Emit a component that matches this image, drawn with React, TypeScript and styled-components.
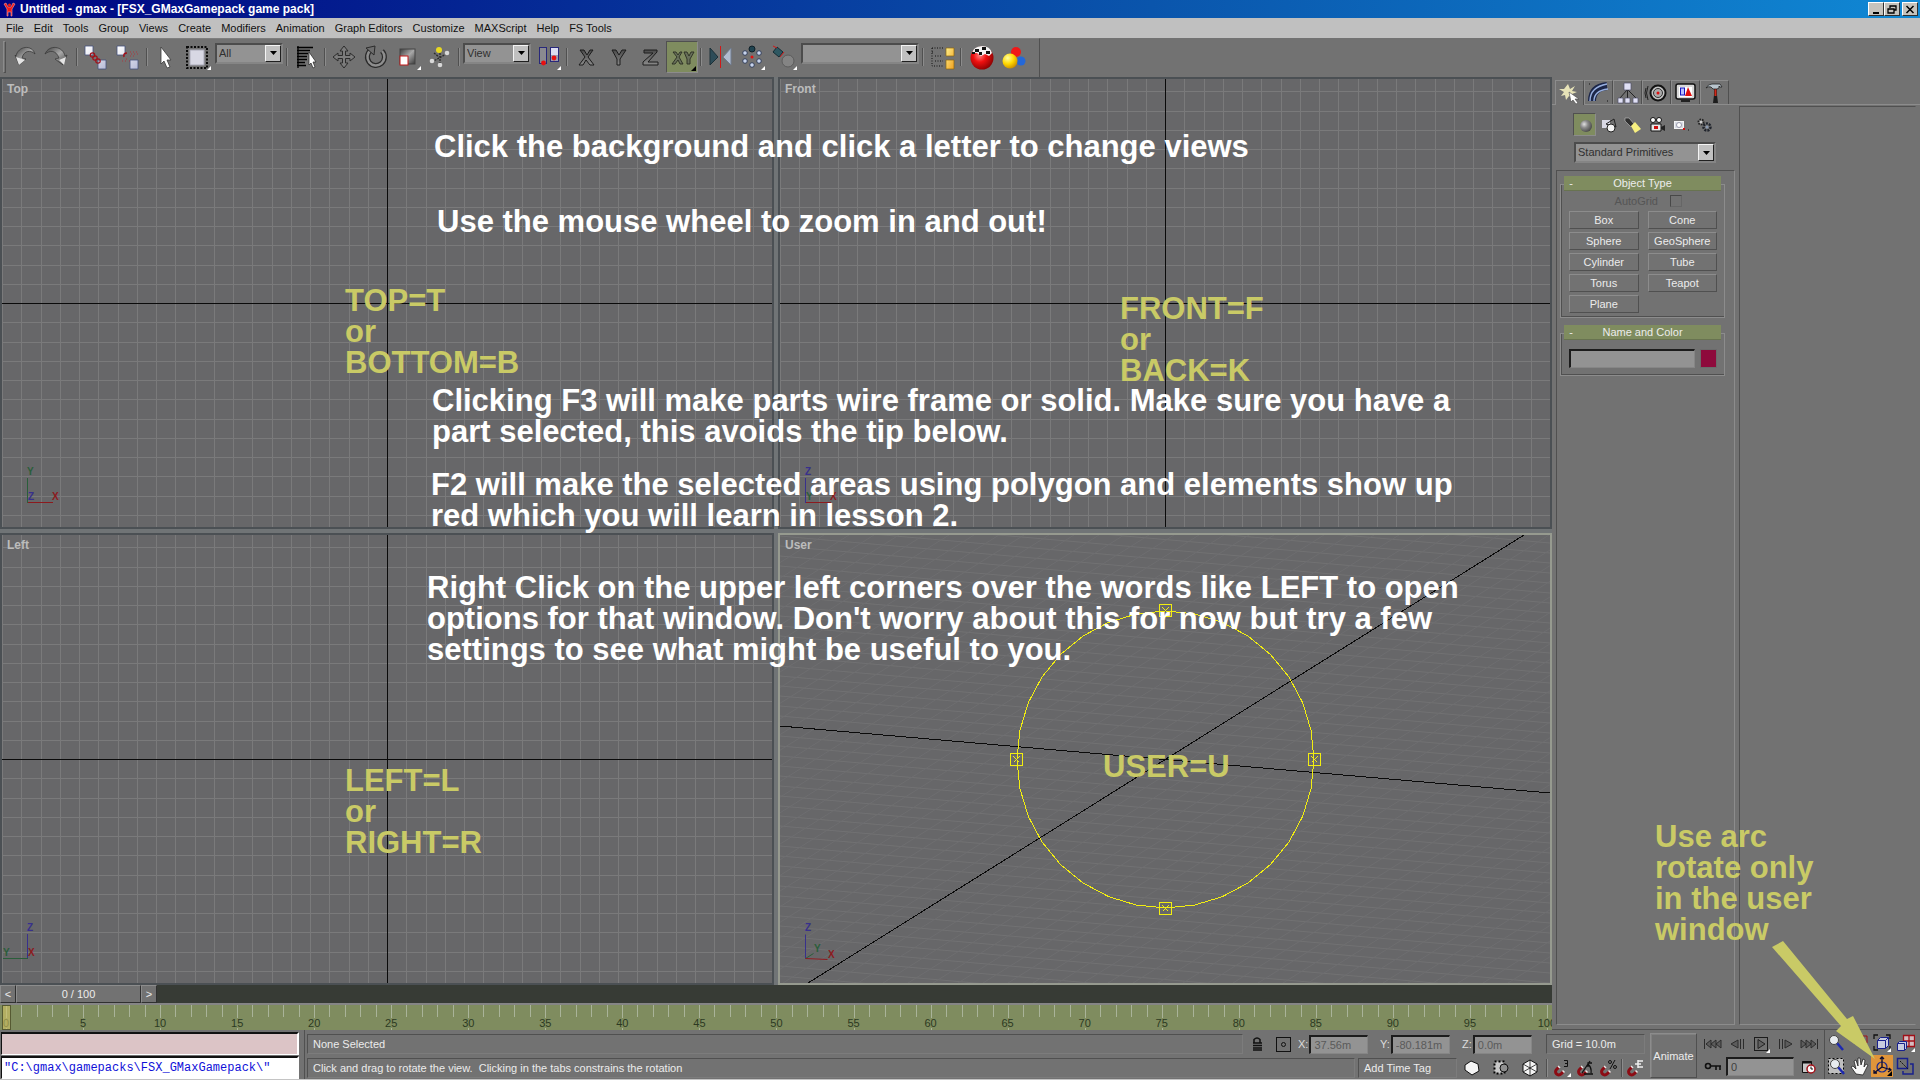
import React from "react";
import styled, { createGlobalStyle, css } from "styled-components";

const c = {
  face: "#727272",
  dark: "#505050",
  light: "#8c8c8c",
  field: "#939393",
  olive: "#7f8c5f",
  view: "#676769",
  gridLine: "#7a7a7b",
  viewEdge: "#4b5054",
  yellow: "#c9ca66",
  text: "#ececec",
};

const Global = createGlobalStyle`
  *, *::before, *::after { box-sizing: border-box; }
  body { margin: 0; background: ${c.face}; overflow: hidden; }
  body, button, input, select, textarea {
    font-family: "Liberation Sans", Arial, sans-serif;
    font-size: 11px;
  }
`;

const Window = styled.div`
  position: relative;
  display: flex;
  flex-direction: column;
  height: 100vh;
  background: ${c.face};
  color: ${c.text};
  overflow: hidden;
`;

/* ---------- title and menu ---------- */
const TitleBar = styled.header`
  display: flex;
  align-items: center;
  flex: none;
  height: 18px;
  padding: 0 2px 0 3px;
  gap: 4px;
  background: linear-gradient(to right, #000482, #0a55ac 60%, #1088d4);
`;
const Title = styled.h1`
  flex: 1;
  margin: 0;
  font-size: 12px;
  line-height: 18px;
  font-weight: bold;
  color: #fff;
`;
const WindowButtons = styled.div`
  display: flex;
  align-items: center;
`;
const WindowButton = styled.button<{ $gap?: boolean }>`
  display: grid;
  place-items: center;
  width: 16px;
  height: 14px;
  padding: 0;
  margin-left: ${(p) => (p.$gap ? 2 : 0)}px;
  background: #c6c3bd;
  border: 1px solid;
  border-color: #fff #303030 #303030 #fff;
`;
const MenuBar = styled.nav`
  display: flex;
  align-items: center;
  flex: none;
  height: 20px;
  padding-left: 6px;
  gap: 10px;
  background: #c0c0c0;
`;
const MenuItem = styled.button`
  padding: 0;
  border: 0;
  background: none;
  color: #111;
  line-height: 18px;
`;

/* ---------- toolbar ---------- */
const Toolbar = styled.div`
  display: flex;
  align-items: center;
  flex: none;
  align-self: flex-start;
  height: 39px;
  padding: 0 11px 2px 0;
  border-top: 1px solid #7e7e7e;
  border-right: 1px solid ${c.dark};
`;
const Grip = styled.span`
  width: 3px;
  height: 32px;
  margin: 0 4px 0 3px;
  border: 1px solid;
  border-color: ${c.light} ${c.dark} ${c.dark} ${c.light};
`;
const Separator = styled.span`
  width: 2px;
  height: 18px;
  margin: 0 2px;
  border-left: 1px solid ${c.dark};
  border-right: 1px solid ${c.light};
`;
const ToolButton = styled.button<{ $active?: boolean }>`
  position: relative;
  display: block;
  width: 32px;
  height: 32px;
  padding: 0;
  border: 0;
  background: none;
  svg { display: block; }
  ${(p) =>
    p.$active &&
    css`
      background: ${c.olive};
      background-clip: padding-box;
      border: 1px solid;
      border-color: ${c.dark} ${c.light} ${c.light} ${c.dark};
      svg { margin: -1px; }
    `}
`;
const SelectFrame = styled.span<{ $w: number; $raise?: boolean }>`
  display: grid;
  grid-template-columns: 1fr 16px;
  width: ${(p) => p.$w}px;
  height: 21px;
  margin: 0 1px ${(p) => (p.$raise ? 8 : 0)}px;
  border: 2px solid;
  border-color: #4c4c4c #858585 #858585 #4c4c4c;
  background: ${c.field};
`;
const SelectField = styled.select`
  grid-area: 1 / 1 / 2 / 3;
  min-width: 0;
  width: 100%;
  padding: 0 18px 0 2px;
  appearance: none;
  border: 0;
  border-radius: 0;
  background: transparent;
  color: #303030;
  line-height: 17px;
`;
const SelectArrow = styled.span`
  grid-area: 1 / 2 / 2 / 3;
  display: grid;
  place-items: center;
  pointer-events: none;
  background: #c0c0c0;
  border: 1px solid;
  border-color: #f4f4f4 #202020 #202020 #f4f4f4;
`;

/* ---------- work area ---------- */
const Work = styled.main`
  display: flex;
  flex: 1;
  min-height: 0;
`;
const Stage = styled.div`
  display: flex;
  flex-direction: column;
  flex: 1;
  min-width: 0;
`;
const Viewports = styled.div`
  display: grid;
  flex: 1;
  min-height: 0;
  grid-template: 1fr 1fr / 1fr 1fr;
  gap: 4px;
  background: #707476;
`;
const Viewport = styled.section<{ $active?: boolean }>`
  position: relative;
  min-width: 0;
  min-height: 0;
  overflow: hidden;
  border: 2px solid ${(p) => (p.$active ? "#969a8f" : c.viewEdge)};
  background: ${c.view};
  > svg { position: absolute; inset: 0; width: 100%; height: 100%; }
`;
const ViewportName = styled.h2`
  position: absolute;
  top: 3px;
  left: 5px;
  margin: 0;
  font-size: 12px;
  line-height: 14px;
  font-weight: bold;
  color: #bcbcbc;
`;
const AxisText = styled.text`
  font: bold 10px "Liberation Sans", Arial, sans-serif;
`;

/* ---------- time controls ---------- */
const SliderBar = styled.div`
  display: flex;
  flex: none;
  height: 18px;
  background: #373b35;
`;
const SliderButton = styled.button<{ $wide?: boolean }>`
  width: ${(p) => (p.$wide ? 125 : 16)}px;
  padding: 0;
  background: ${c.face};
  color: ${c.text};
  border: 1px solid;
  border-color: ${c.light} #303030 #303030 ${c.light};
`;
const Track = styled.div`
  position: relative;
  display: flex;
  flex: none;
  height: 27px;
  padding-left: 6px;
  overflow: hidden;
  background: ${c.olive};
  border-top: 2px solid #858585;
`;
const minorTicks =
  "repeating-linear-gradient(to right, #a9b399 0 1px, transparent 1px 20%) 0 0 / 100% 12px no-repeat,";
const TrackCell = styled.div<{ $last?: boolean }>`
  display: flex;
  align-items: flex-end;
  flex: ${(p) => (p.$last ? "0 0 5px" : "1 1 0")};
  min-width: 0;
  background: ${(p) => (p.$last ? "" : minorTicks)}
    linear-gradient(#a9b399, #a9b399) 0 0 / 1px 13px no-repeat,
    linear-gradient(#a9b399, #a9b399) 0 100% / 1px 2px no-repeat;
`;
const TrackLabel = styled.span`
  flex: none;
  width: 30px;
  margin: 0 0 1px -15px;
  text-align: center;
  font-size: 11px;
  line-height: 12px;
  color: #2c3a22;
`;
const TrackCursor = styled.span`
  position: absolute;
  left: 2px;
  top: 0;
  width: 9px;
  height: 25px;
  border: 1px solid #565a32;
  background: rgba(212, 196, 100, 0.6);
`;

/* ---------- command panel ---------- */
const Panel = styled.aside`
  display: flex;
  flex-direction: column;
  flex: 0 0 368px;
  min-width: 0;
  padding-top: 3px;
  border-bottom: 1px solid ${c.dark};
`;
const Tabs = styled.div`
  display: flex;
  flex: none;
  height: 25px;
  padding-left: 3px;
  border-bottom: 1px solid ${c.light};
`;
const Tab = styled.button<{ $active?: boolean }>`
  width: 29px;
  height: ${(p) => (p.$active ? 25 : 24)}px;
  padding: 0;
  background: ${c.face};
  border: solid;
  border-width: 1px 1px 0 1px;
  border-color: ${c.light} ${c.dark} ${c.dark} ${c.light};
  svg { display: block; }
`;
const PanelBody = styled.div`
  display: flex;
  flex: 1;
  min-height: 0;
  padding: 1px 4px 4px;
`;
const PanelColumn = styled.div`
  display: flex;
  flex-direction: column;
  flex: 0 0 179px;
  min-width: 0;
`;
const PanelRest = styled.div`
  flex: 1;
  margin-left: 4px;
  border: 1px solid;
  border-color: ${c.dark} transparent ${c.light} ${c.dark};
`;
const Categories = styled.div`
  display: flex;
  gap: 1px;
  padding: 7px 0 6px 17px;
`;
const Category = styled.button<{ $active?: boolean }>`
  width: 23px;
  height: 23px;
  padding: 0;
  background: ${(p) => (p.$active ? c.olive : "none")};
  border: 1px solid;
  border-color: ${(p) =>
    p.$active ? `${c.dark} ${c.light} ${c.light} ${c.dark}` : "transparent"};
  svg { display: block; }
`;
const SubtypeRow = styled.div`
  padding-left: 17px;
`;
const Rollouts = styled.div`
  flex: 1;
  margin-top: 7px;
  padding: 5px 9px 0 3px;
  border: 1px solid;
  border-color: ${c.dark} ${c.light} ${c.light} ${c.dark};
`;
const Rollout = styled.section`
  margin-bottom: 7px;
`;
const RolloutHead = styled.button`
  position: relative;
  display: grid;
  grid-template-columns: 14px 1fr 14px;
  align-items: center;
  width: calc(100% - 8px);
  height: 15px;
  margin: 0 4px;
  padding: 0;
  border: 0;
  border-bottom: 1px solid #687350;
  background: ${c.olive};
  color: ${c.text};
  line-height: 14px;
`;
const RolloutBox = styled.div`
  margin-top: -7px;
  padding: 9px 7px 3px 8px;
  border: 1px solid ${c.light};
  box-shadow: inset 1px 0 ${c.dark}, inset 0 -1px ${c.dark};
`;
const AutoGrid = styled.label`
  display: flex;
  align-items: center;
  justify-content: flex-end;
  gap: 12px;
  height: 13px;
  margin: 0 35px 4px 0;
  color: #555;
`;
const CheckBox = styled.input`
  appearance: none;
  width: 12px;
  height: 12px;
  margin: 0;
  border: 1px solid;
  border-color: #484848 #666 #666 #484848;
`;
const ObjectGrid = styled.div`
  display: grid;
  grid-template-columns: 1fr 1fr;
  gap: 3px 9px;
  padding-bottom: 1px;
`;
const PushButton = styled.button`
  height: 18px;
  padding: 0;
  background: ${c.face};
  color: ${c.text};
  line-height: 14px;
  border: 1px solid;
  border-color: ${c.light} ${c.dark} ${c.dark} ${c.light};
`;
const NameRow = styled.div`
  display: flex;
  gap: 5px;
  padding: 6px 0 4px;
`;
const TextField = styled.input`
  flex: 1 1 0;
  width: 0;
  min-width: 0;
  height: 19px;
  padding: 0 0 0 3px;
  border: solid;
  border-color: #1c1c1c #868686 #868686 #1c1c1c;
  border-width: 2px 1px 1px 2px;
  background: ${c.field};
  color: #404040;
`;
const Swatch = styled.button`
  width: 17px;
  height: 19px;
  padding: 0;
  border: 1px solid #6b6b6b;
  background: #8e0a3c;
`;

/* ---------- status bar ---------- */
const StatusBar = styled.footer`
  display: flex;
  flex: none;
  height: 50px;
  border-bottom: 1px solid #c4c4c4;
`;
const Listener = styled.div`
  display: flex;
  flex-direction: column;
  gap: 1px;
  flex: 0 0 299px;
  padding: 2px 0 0 1px;
`;
const ListenerLine = styled.input<{ $pink?: boolean }>`
  width: 100%;
  height: 23px;
  padding: 0 0 0 2px;
  border: solid;
  border-color: #111 #fff #fff #111;
  border-width: 2px 2px 1px 1px;
  background: ${(p) => (p.$pink ? "#dcc4c6" : "#fff")};
  color: #1010d8;
  font-family: "Liberation Mono", monospace;
  font-size: 12px;
`;
const StatusMain = styled.div`
  display: flex;
  flex-direction: column;
  flex: 1;
  gap: 4px;
  min-width: 0;
  margin-left: 5px;
  padding: 4px 3px 0 2px;
  border-left: 1px solid ${c.dark};
`;
const StatusRow = styled.div`
  display: flex;
  align-items: center;
  height: 20px;
`;
const Sunken = styled.div<{ $w?: number }>`
  flex: ${(p) => (p.$w ? `0 0 ${p.$w}px` : "1 1 0")};
  height: 20px;
  padding-left: 5px;
  line-height: 18px;
  white-space: pre;
  overflow: hidden;
  border: 1px solid;
  border-color: ${c.dark} #7c7c7c #7c7c7c ${c.dark};
`;
const IconCell = styled.button<{ $w: number; $active?: boolean }>`
  display: grid;
  place-items: center;
  flex: 0 0 ${(p) => p.$w}px;
  width: ${(p) => p.$w}px;
  height: 22px;
  padding: 0;
  border: 0;
  background: ${(p) => (p.$active ? "#e0953a" : "none")};
`;
const Coordinate = styled.label`
  display: flex;
  align-items: center;
  flex: 0 0 82px;
  gap: 1px;
  padding-right: 12px;
  color: #dcdcdc;
  input { color: #5a5a5a; }
`;
const Gap = styled.span<{ $w: number }>`
  flex: 0 0 ${(p) => p.$w}px;
`;
const AnimateButton = styled.button`
  flex: 0 0 47px;
  height: 45px;
  margin: 3px 3px 0 2px;
  padding: 0;
  background: ${c.face};
  color: ${c.text};
  border: 1px solid;
  border-color: ${c.light} ${c.dark} ${c.dark} ${c.light};
  box-shadow: inset 1px 1px #808080;
`;
const Playback = styled.div`
  flex: 0 0 122px;
  min-width: 0;
  padding-top: 2px;
`;
const PlayRow = styled.div`
  display: flex;
  align-items: center;
  justify-content: space-between;
  height: 23px;
`;
const Navigation = styled.div`
  display: grid;
  grid-template-columns: repeat(4, 23px);
  grid-auto-rows: 23px;
  margin-left: 2px;
  padding: 2px 3px 0 0;
  border-left: 1px solid ${c.dark};
`;

/* ---------- notes written over the screen ---------- */
const Note = styled.p<{ $x: number; $y: number; $tone?: "yellow" }>`
  position: absolute;
  left: ${(p) => p.$x}px;
  top: ${(p) => p.$y}px;
  margin: 0;
  font-size: 31px;
  line-height: 31px;
  font-weight: bold;
  white-space: pre-line;
  width: max-content;
  color: ${(p) => (p.$tone ? c.yellow : "#fff")};
`;
const NoteArrow = styled.svg`
  position: absolute;
  left: 1765px;
  top: 935px;
  width: 115px;
  height: 130px;
`;

/* ---------- drawings ---------- */
const Flyout = () => <path d="M29 25v4h-4z" fill="#fff" />;

const HiddenSvg = styled.svg`
  position: absolute;
`;

const Defs = () => (
  <HiddenSvg width="0" height="0" aria-hidden="true">
    <defs>
      <linearGradient id="steel" x1="0" y1="0" x2="1" y2="1">
        <stop offset="0" stopColor="#3c3c3c" />
        <stop offset="0.5" stopColor="#a8a8a8" />
        <stop offset="1" stopColor="#3a3a3a" />
      </linearGradient>
      <linearGradient id="letter" x1="0" y1="0" x2="0" y2="1">
        <stop offset="0" stopColor="#4a4a4a" />
        <stop offset="1" stopColor="#8a8a8a" />
      </linearGradient>
      <linearGradient id="paper" x1="0" y1="0" x2="1" y2="1">
        <stop offset="0" stopColor="#fff" />
        <stop offset="1" stopColor="#b8bcd8" />
      </linearGradient>
      <linearGradient id="amber" x1="0" y1="0" x2="1" y2="1">
        <stop offset="0" stopColor="#fff08a" />
        <stop offset="1" stopColor="#f0a020" />
      </linearGradient>
      <radialGradient id="redBall" cx="0.4" cy="0.4" r="0.7">
        <stop offset="0" stopColor="#ff8080" />
        <stop offset="0.4" stopColor="#f01010" />
        <stop offset="1" stopColor="#7a0000" />
      </radialGradient>
      <radialGradient id="yellowBall" cx="0.35" cy="0.3" r="0.8">
        <stop offset="0" stopColor="#ffffa0" />
        <stop offset="0.5" stopColor="#ffd800" />
        <stop offset="1" stopColor="#c08000" />
      </radialGradient>
      <radialGradient id="grayBall" cx="0.35" cy="0.35" r="0.75">
        <stop offset="0" stopColor="#e0e0e0" />
        <stop offset="0.4" stopColor="#8c8c8c" />
        <stop offset="1" stopColor="#404040" />
      </radialGradient>
    </defs>
  </HiddenSvg>
);

const Svg = ({ s = 32, children }: { s?: number; children: React.ReactNode }) => (
  <svg width={s} height={s} viewBox={`0 0 ${s} ${s}`} aria-hidden="true">
    {children}
  </svg>
);

const art: Record<string, React.ReactNode> = {
  undo: (
    <>
      <path d="M6 15C8 5 22 3 25 13C21 9 14 9 12 17l4 1-7 6-4-10z" fill="url(#steel)" stroke="#333" strokeWidth=".7" />
      <path d="M6 16l3 8 6-5z" fill="#e4e4e4" />
    </>
  ),
  redo: (
    <>
      <path d="M23 15C21 5 7 3 3 13C8 9 14 9 17 17l-4 1 8 6 4-10z" fill="url(#steel)" stroke="#333" strokeWidth=".7" />
      <path d="M22 24l2-8-7 3z" fill="#e4e4e4" />
    </>
  ),
  link: (
    <>
      <path d="M5 5h8v9H5zM18 19h8v9h-8z" fill="url(#paper)" stroke="#44507c" strokeWidth=".8" />
      <g fill="none" stroke="#a01018" strokeWidth="1.2">
        <circle cx="12.500" cy="14" r="2.200" />
        <circle cx="15" cy="17" r="2.200" />
        <circle cx="18" cy="20" r="2.200" />
      </g>
    </>
  ),
  unlink: (
    <>
      <path d="M5 5h8v9H5zM18 19h8v9h-8z" fill="url(#paper)" stroke="#44507c" strokeWidth=".8" />
      <path d="M12 16q-1-4 3-4" fill="none" stroke="#a01018" strokeWidth="1.500" />
      <path d="M18 11h1m2 0h1m2 0h1M19 13h1m2 0h1m2 0h1M18 15h1m2 0h1M10 20h1m2 0h1M14 18h1m2 2h1" stroke="#a83840" />
    </>
  ),
  cursor: <path d="M11 6l10 13-4 0 3 7-3 1-3-7-3 3z" fill="#fff" stroke="#3a3a3a" strokeWidth=".8" />,
  region: (
    <>
      <rect x="5" y="6" width="20" height="21" fill="none" stroke="#0a0a0a" strokeWidth="2" strokeDasharray="2 1.500" />
      <rect x="8" y="9" width="14" height="15" fill="#d8d8e4" stroke="#aaaab8" />
      <Flyout />
    </>
  ),
  byName: (
    <>
      <path d="M7 6.500h16M7 9.500h13M7 12.500h11M7 15.500h10M7 18.500h10M7 21.500h8M7 24.500h9M8 5v22" stroke="#000" strokeWidth="1.300" />
      <path d="M19 11l7 10-3 0 2 5-2 1-2-5-2 2z" fill="#fff" stroke="#222" strokeWidth=".7" />
    </>
  ),
  move: (
    <path
      d="M16 5l4 5h-2.500v4.500H22V12l5 4-5 4v-2.500h-4.500V22H20l-4 5-4-5h2.500v-4.500H10V20l-5-4 5-4v2.500h4.500V10H12z"
      fill="#7c7c7c"
      stroke="#2c2c2c"
    />
  ),
  rotate: (
    <>
      <path d="M11 9A8.500 8.500 0 1 0 22 10" fill="none" stroke="#2b2b2b" strokeWidth="5" />
      <path d="M11 9A8.500 8.500 0 1 0 22 10" fill="none" stroke="#8e8e8e" strokeWidth="2.500" />
      <path d="M6 7l9-2-1 9z" fill="#6e6e6e" stroke="#2b2b2b" />
    </>
  ),
  scale: (
    <>
      <rect x="8" y="8" width="15" height="15" fill="url(#steel)" stroke="#444" />
      <rect x="8" y="15" width="8" height="9" fill="#fff" stroke="#c01818" />
      <Flyout />
    </>
  ),
  manipulate: (
    <>
      <path d="M16 9v15M8 21l16-9M10 12l5 4" stroke="#2c2c2c" strokeWidth="1.300" strokeDasharray="2 1" />
      <circle cx="15" cy="9" r="3" fill="#e8d820" />
      <circle cx="23" cy="12" r="2.300" fill="#d8d8d8" />
      <circle cx="8" cy="20" r="2.300" fill="#d8d8d8" />
      <circle cx="16" cy="24" r="2.300" fill="#d8d8d8" />
    </>
  ),
  center: (
    <>
      <rect x="7.500" y="6.500" width="7" height="16" fill="#8a8a90" stroke="#28287a" />
      <rect x="18.500" y="6.500" width="8" height="14" fill="#dcdcf0" stroke="#28287a" />
      <path d="M19 14h7v6h-7z" fill="#9c9cb0" />
      <circle cx="11.500" cy="22" r="2.400" fill="#e81010" />
      <circle cx="22" cy="17" r="2.400" fill="#e81010" />
      <Flyout />
    </>
  ),
  X: <path d="M10 9h4l3 5 3-5h3l-5 7 6 8h-4l-4-5-3 5H9l6-8z" fill="url(#letter)" stroke="#1c1c1c" />,
  Y: <path d="M10 9h4l3 5 3-5h4l-6 9v6h-3v-6z" fill="url(#letter)" stroke="#1c1c1c" />,
  Z: <path d="M10 9h13v2L14 21h10v3H9v-3l10-9h-9z" fill="url(#letter)" stroke="#1c1c1c" />,
  XY: (
    <>
      <path
        d="M7 11h3l2 3 2-3h2l-3 5 4 7h-3l-2-4-3 4H6l5-7zM18 11h3l2 4 2-4h3l-4 7v5h-3v-5z"
        fill="#68705a"
        stroke="#2a2e22"
        strokeWidth=".9"
      />
      <path d="M30 25v5h-5z" />
    </>
  ),
  mirror: (
    <>
      <path d="M6 7l8 9-8 8z" fill="#2e4c58" stroke="#1c3038" />
      <path d="M27 7l-8 9 8 8z" fill="#b0bcd0" stroke="#707c90" />
      <path d="M16.500 5v22" stroke="#d01818" />
    </>
  ),
  array: (
    <>
      <g fill="#c8d4ec" stroke="#34405c">
        <circle cx="9" cy="12" r="2.300" />
        <circle cx="23" cy="12" r="2.300" />
        <circle cx="9" cy="20" r="2.300" />
        <circle cx="23" cy="20" r="2.300" />
        <circle cx="16" cy="24" r="2.300" />
      </g>
      <circle cx="16" cy="8" r="3" fill="#204450" stroke="#102028" />
      <circle cx="16" cy="16" r="1.500" fill="#e01010" />
      <Flyout />
    </>
  ),
  align: (
    <>
      <circle cx="20" cy="20" r="6" fill="#848484" stroke="#5c5c5c" />
      <path d="M9 6l6 5-4 5-6-5z" fill="#2e5862" stroke="#142c34" />
      <path d="M12 16l4-5M5 5l4 2" stroke="#d01818" />
      <Flyout />
    </>
  ),
  trackView: (
    <>
      <path d="M6 7h12M6 11h1M9 15h7M6 7v18h11M9 20h8" fill="none" stroke="#111" strokeDasharray="1 1.500" />
      <path d="M20 7h8v8h-8zM20 19h8v9h-8z" fill="url(#amber)" stroke="#8a6410" strokeWidth=".7" />
    </>
  ),
  material: (
    <>
      <circle cx="18" cy="17" r="11.500" fill="url(#redBall)" />
      <path d="M8 12Q9 6 18 5q8 0 10 7l-3 3-4-2-4 2-4-3z" fill="#f4f4f4" />
      <path d="M11 8h4v3h-4zM18 6h4v3h-4zM15 11h3v3h-3zM22 10h4v3h-4zM8 11h3v2H8z" fill="#111" />
    </>
  ),
  balls: (
    <>
      <circle cx="20" cy="11" r="5" fill="#f01818" />
      <circle cx="25" cy="20" r="4.500" fill="#2468d8" />
      <circle cx="14" cy="20" r="7.500" fill="url(#yellowBall)" />
    </>
  ),
};

const tabArt: React.ReactNode[] = [
  <>
    <path d="M12 2l2 5 5-3-3 5 5 1-5 2 2 5-5-3-3 4-1-5-4 1 3-4-5-3 5 0z" fill="#f4f0c0" opacity=".9" />
    <path d="M13 10l10 7-4 0 3 4-2 1-3-4-2 2z" fill="#fff" stroke="#444" strokeWidth=".6" />
  </>,
  <>
    <path d="M7 20C7 11 12 6 22 5" fill="none" stroke="#1c2648" strokeWidth="8" />
    <path d="M5 20C5 10 11 5 22 3M9 20C9 13 14 9 23 8" fill="none" stroke="#98b0e0" strokeWidth="1.400" />
    <path d="M4 3h1M22 20h1" stroke="#111" />
  </>,
  <>
    <path d="M13.500 9v9M13 9l-7 8M14 9l8 8" stroke="#222" />
    <path d="M10 2h7v7h-7zM4 17h5v5H4zM11 17h5v5h-5zM19 17h5v5h-5z" fill="#e0e0f4" stroke="#50506c" strokeWidth=".7" />
  </>,
  <>
    <circle cx="15" cy="12" r="7.500" fill="#c4c4c4" stroke="#111" strokeWidth="2" />
    <circle cx="15" cy="12" r="4.500" fill="#aaa" stroke="#333" />
    <circle cx="15" cy="12" r="1.500" fill="#e01010" />
    <path d="M5 5q-3 7 0 14M3 7q-2 5 0 10" fill="none" stroke="#222" />
  </>,
  <>
    <rect x="4" y="3" width="19" height="15" rx="2" fill="#d8d8d8" stroke="#111" strokeWidth="1.500" />
    <rect x="7" y="6" width="13" height="10" fill="#fff" />
    <rect x="8.500" y="7" width="4" height="7" fill="#b8c0ff" stroke="#1414c0" />
    <path d="M13 15l3-9 4 9z" fill="#e01010" />
    <path d="M9 20h9" stroke="#222" strokeWidth="2" />
  </>,
  <>
    <path d="M13 8v6l-1 8h5l-1-8V8z" fill="#1c1c1c" />
    <path d="M14.500 8v7" stroke="#d02818" strokeWidth="2" />
    <path d="M5 7q2-4 6-4h8l2 3h-2l-1-1v2l-2 1h-4l-2-2q-3-1-5 1z" fill="#b8c4cc" stroke="#222" strokeWidth=".8" />
  </>,
];

const categoryArt: React.ReactNode[] = [
  <circle cx="12" cy="12" r="6" fill="url(#grayBall)" />,
  <>
    <path d="M4 6h8v8H4z" fill="#d8d8e4" />
    <path d="M8 10l8-5 2 8z" fill="none" stroke="#222" />
    <circle cx="13" cy="14" r="4" fill="#f4f4f4" stroke="#222" />
  </>,
  <>
    <path d="M3 4l4 0 5 6-3 3-6-6z" fill="#303030" stroke="#c0c0c0" strokeWidth=".6" />
    <path d="M9 12l4-4 6 7-6 4z" fill="#f8f080" />
  </>,
  <>
    <circle cx="7" cy="6" r="2.500" fill="#fff" stroke="#111" />
    <circle cx="13" cy="6" r="2.500" fill="#fff" stroke="#111" />
    <path d="M5 10h10v7H5z" fill="#e8e8e8" stroke="#111" />
    <path d="M8 12h4v3H8z" fill="#d01010" />
    <path d="M15 13l4-2v6l-4-2z" fill="#222" />
  </>,
  <>
    <rect x="4.500" y="7.500" width="9" height="7" fill="#d8dce4" stroke="#f4f4f4" />
    <circle cx="9" cy="11" r="2.500" fill="#fff" stroke="#99a" />
    <path d="M13 15h2" stroke="#d01010" strokeWidth="2" />
    <path d="M18 16h1" stroke="#111" />
  </>,
  <>
    <circle cx="7" cy="8" r="2.500" fill="none" stroke="#222" strokeWidth="2" strokeDasharray="1.500 1" />
    <circle cx="7" cy="8" r="1.500" fill="#ccc" />
    <circle cx="13" cy="13" r="3.500" fill="none" stroke="#20242c" strokeWidth="2.500" strokeDasharray="2 1" />
    <circle cx="13" cy="13" r="1.500" fill="#8898b0" />
  </>,
];

const Magnet = () => (
  <>
    <path d="M6 8L3.500 10.500a3 3 0 0 0 4.500 4.500l2.500-2.500" fill="none" stroke="#8c0c14" strokeWidth="3" />
    <path d="M5 7l2 2M9.500 11.500l2 2" stroke="#e8e8e8" strokeWidth="1.500" />
  </>
);
const snapArt: React.ReactNode[] = [
  <>
    <Magnet />
    <path d="M11 1.500h3.500v6h-3.500M12 4.500h2" fill="none" stroke="#111" />
    <path d="M18 14v4h-4z" fill="#fff" />
  </>,
  <>
    <Magnet />
    <path d="M6 14L14 2M8 15h9M12 5q4 4 3 9M12 8V4h4" fill="none" stroke="#111" strokeWidth="1.300" />
  </>,
  <>
    <Magnet />
    <circle cx="11" cy="3" r="1.500" fill="none" stroke="#111" />
    <circle cx="16" cy="8" r="1.500" fill="none" stroke="#111" />
    <path d="M16 1l-5 9" stroke="#111" />
  </>,
  <>
    <Magnet />
    <path d="M12 1v8M12 2h5M12 8h5M9 5h6" fill="none" stroke="#eee" strokeWidth="1.500" />
  </>,
];
const shapeArt: React.ReactNode[] = [
  <path d="M2 6l6-4 7 3 1 7-7 4-7-5z" fill="#f4f4f4" stroke="#111" />,
  <>
    <path d="M2.500 2.500h10v12h-10z" fill="#c8c8c8" stroke="#000" strokeWidth="2" strokeDasharray="2 2" />
    <circle cx="12" cy="9" r="4" fill="#909090" stroke="#111" />
  </>,
  <>
    <path d="M2 5l7-4 7 4v8l-7 4-7-4z" fill="#f4f4f4" stroke="#111" />
    <path d="M2 5l7 4 7-4M9 9v8M9 1v8M2 13l7-4 7 4" fill="none" stroke="#111" strokeWidth=".8" />
  </>,
];
const Lens = ({ x = 8, y = 7 }: { x?: number; y?: number }) => (
  <>
    <path d={`M${x + 3} ${y + 3}l6 7`} stroke="#1c28b0" strokeWidth="2.500" />
    <circle cx={x} cy={y} r="4.500" fill="#e8ecf0" stroke="#444" />
  </>
);
const navArt: React.ReactNode[] = [
  <Lens />,
  <>
    <path d="M11 3h7v7h-7z" fill="none" stroke="#a01018" />
    <Lens />
  </>,
  <>
    <path d="M2 6V2h4M14 2h4v4M18 13v4M2 13v4h4" fill="none" stroke="#111" strokeWidth="1.300" />
    <path d="M5.500 7.500h8v8h-8zM5.500 7.500l3-3h8v8l-3 3M13.500 7.500l3-3" fill="#c8cce0" stroke="#18208c" />
    <path d="M19 15v4h-4z" fill="#fff" />
  </>,
  <>
    <path d="M8.500 2.500h11v11h-11zM14 2v12M8 8h12" fill="#d4bcc0" stroke="#a01018" strokeWidth="1.300" />
    <path d="M2.500 10.500h7v7h-7zM2.500 10.500l2-2h7v7l-2 2" fill="#c8cce0" stroke="#18208c" />
    <path d="M20 15v4h-4z" fill="#fff" />
  </>,
  <>
    <rect x="2.500" y="2.500" width="15" height="15" fill="#c0c0c0" stroke="#000" strokeDasharray="2 2" />
    <Lens x={9} y={8} />
  </>,
  <path
    d="M7 18l-5-7 2-1 3 3L5 5l2-1 2 6V2h2l1 7 2-6 2 1-1 7 2-3 2 1-3 6-2 4z"
    fill="#f8f8f8"
    stroke="#222"
    strokeWidth=".8"
  />,
  <>
    <circle cx="10" cy="11" r="5" fill="none" stroke="#1a2a90" strokeWidth="1.200" />
    <path d="M10 11V1M10 11l-8 6M10 11l9 3M8 3l2-2 2 2M2 14v3h3M17 12l2 2-3 2" fill="none" stroke="#0a0a30" strokeWidth="1.300" />
    <path d="M20 15v5h-5z" />
  </>,
  <>
    <path d="M2.500 2.500h10v10h-10z" fill="none" stroke="#18208c" strokeWidth="1.500" />
    <path d="M15 8h3v10H8v-3" fill="none" stroke="#18208c" strokeWidth="1.500" />
    <path d="M5 5l8 8" stroke="#111" strokeDasharray="2 1" />
  </>,
];
const playArt: React.ReactNode[] = [
  <path d="M2.500 5v10M9 6v8l-5-4zM14 6v8l-5-4zM19 6v8l-5-4z" fill="#5c5c5c" stroke="#2c2c2c" />,
  <path d="M4 10l7-4v8zM13.500 5v10M16.500 5v10" fill="#5c5c5c" stroke="#2c2c2c" />,
  <>
    <rect x="3.500" y="3.500" width="13" height="13" fill="none" stroke="#1c1c1c" />
    <path d="M7 5.500v9l7-4.500z" fill="#606060" stroke="#222" />
    <path d="M19 15v4h-4z" fill="#fff" />
  </>,
  <path d="M16 10L9 6v8zM6.500 5v10M3.500 5v10" fill="#5c5c5c" stroke="#2c2c2c" />,
  <path d="M17.500 5v10M11 6v8l5-4zM6 6v8l5-4zM1 6v8l5-4z" fill="#5c5c5c" stroke="#2c2c2c" />,
];

const axisColor = { x: "#8c1a1e", y: "#2a5e3a", z: "#38308c" };

const Tripod = ({ kind }: { kind: "top" | "front" | "left" | "user" }) => {
  const { x, y, z } = axisColor;
  if (kind === "top")
    return (
      <>
        <path d="M25.500 423.500v-25" stroke={y} />
        <path d="M25.500 423.500h25" stroke={x} />
        <AxisText x="25" y="396" fill={y}>Y</AxisText>
        <AxisText x="50" y="421" fill={x}>X</AxisText>
        <AxisText x="26" y="421" fill={z}>Z</AxisText>
      </>
    );
  if (kind === "front")
    return (
      <>
        <path d="M25.500 423.500v-25" stroke={z} />
        <path d="M25.500 423.500h25" stroke={x} />
        <AxisText x="25" y="396" fill={z}>Z</AxisText>
        <AxisText x="50" y="421" fill={x}>X</AxisText>
        <AxisText x="26" y="421" fill={y}>Y</AxisText>
      </>
    );
  if (kind === "left")
    return (
      <>
        <path d="M25.500 423.500v-25" stroke={z} />
        <path d="M25.500 423.500h-25" stroke={y} />
        <AxisText x="25" y="396" fill={z}>Z</AxisText>
        <AxisText x="1" y="421" fill={y}>Y</AxisText>
        <AxisText x="26" y="421" fill={x}>X</AxisText>
      </>
    );
  return (
    <>
      <path d="M25.500 423.500v-24" stroke={z} />
      <path d="M25.500 423.500l8-5" stroke={y} />
      <path d="M25.500 423.500l22 1" stroke={x} />
      <AxisText x="25" y="396" fill={z}>Z</AxisText>
      <AxisText x="34" y="417" fill={y}>Y</AxisText>
      <AxisText x="48" y="423" fill={x}>X</AxisText>
    </>
  );
};

const span = (n: number) => Array.from({ length: 2 * n + 1 }, (_, i) => i - n);

const OrthoScene = ({ kind }: { kind: "top" | "front" | "left" }) => (
  <svg viewBox="0 0 770 448" preserveAspectRatio="xMidYMid slice" shapeRendering="crispEdges" aria-hidden="true">
    {span(20).map((i) => {
      const x = Math.round(385 + i * 19.25) + 0.5;
      return <path key={`v${i}`} d={`M${x} 0V448`} stroke={c.gridLine} />;
    })}
    {span(11).map((i) => {
      const y = Math.round(224 + i * 19.25) + 0.5;
      return <path key={`h${i}`} d={`M0 ${y}H770`} stroke={c.gridLine} />;
    })}
    <path d="M385.500 0V448M0 224.500H770" stroke="#0a0a0a" />
    <Tripod kind={kind} />
  </svg>
);

const UserScene = () => {
  const ring = Array.from({ length: 32 }, (_, i) => {
    const a = (i * Math.PI) / 16;
    return `${(385.5 + 148.5 * Math.cos(a)).toFixed(1)},${(224.5 + 148.5 * Math.sin(a)).toFixed(1)}`;
  }).join(" ");
  const handles = [
    [385.5, 75.5],
    [385.5, 373.5],
    [236.5, 224.5],
    [534.5, 224.5],
  ];
  return (
    <svg viewBox="0 0 770 448" preserveAspectRatio="xMidYMid slice" aria-hidden="true">
      {span(25).map((i) => (
        <path key={`a${i}`} d={`M0 ${191 + i * 10}L770 ${258 + i * 10}`} stroke="#737374" strokeWidth=".9" />
      ))}
      {span(28).map((i) => (
        <path key={`b${i}`} d={`M${28 + i * 25} 448L${744 + i * 25} 0`} stroke="#6e6e70" strokeWidth=".9" />
      ))}
      <g shapeRendering="crispEdges">
        <path d="M0 191L770 258M28 448L744 0" stroke="#0a0a0a" />
        <g fill="none" stroke="#f2ee10">
          <polygon points={ring} />
          {handles.map(([x, y]) => (
            <path key={`${x}-${y}`} d={`M${x - 6} ${y - 6}h12v12h-12zM${x - 3} ${y - 3}l6 6M${x + 3} ${y - 3}l-6 6`} />
          ))}
        </g>
      </g>
      <Tripod kind="user" />
    </svg>
  );
};

/* ---------- composed pieces ---------- */
const Tool = ({ name, active }: { name: string; active?: boolean }) => (
  <ToolButton $active={active} aria-label={name}>
    <Svg>{art[name]}</Svg>
  </ToolButton>
);

const Dropdown = ({ label, value, w, raise }: { label: string; value: string; w: number; raise?: boolean }) => (
  <SelectFrame $w={w} $raise={raise}>
    <SelectField aria-label={label} defaultValue={value}>
      <option value={value}>{value}</option>
    </SelectField>
    <SelectArrow>
      <svg width="7" height="4" viewBox="0 0 7 4" aria-hidden="true">
        <path d="M0 0h7L3.500 4z" />
      </svg>
    </SelectArrow>
  </SelectFrame>
);

const menus = [
  "File", "Edit", "Tools", "Group", "Views", "Create", "Modifiers", "Animation",
  "Graph Editors", "Customize", "MAXScript", "Help", "FS Tools",
];
const primitives = ["Box", "Cone", "Sphere", "GeoSphere", "Cylinder", "Tube", "Torus", "Teapot", "Plane"];
const tabNames = ["Create", "Modify", "Hierarchy", "Motion", "Display", "Utilities"];
const categoryNames = ["Geometry", "Shapes", "Lights", "Cameras", "Helpers", "Systems"];
const navNames = [
  "Zoom", "Zoom All", "Zoom Extents", "Zoom Extents All",
  "Region Zoom", "Pan", "Arc Rotate", "Min/Max Toggle",
];
const playNames = ["Go to Start", "Previous Frame", "Play", "Next Frame", "Go to End"];
const coords: [string, string][] = [["X:", "37.56m"], ["Y:", "-80.181m"], ["Z:", "0.0m"]];

export default function App() {
  return (
    <Window>
      <Global />
      <Defs />
      <TitleBar>
        <svg width="13" height="15" viewBox="0 0 13 15" aria-hidden="true">
          <path d="M1 2l3 5v7h1v-4h3v4h1V7l3-5-2-1-2 4H5L3 1z" fill="#f01818" stroke="#f8a0a0" strokeWidth=".6" />
          <circle cx="6.500" cy="3" r="1.500" fill="#f01818" />
        </svg>
        <Title>Untitled - gmax - [FSX_GMaxGamepack game pack]</Title>
        <WindowButtons>
          <WindowButton aria-label="Minimize">
            <svg width="10" height="9" viewBox="0 0 10 9"><path d="M2 7h6v2H2z" /></svg>
          </WindowButton>
          <WindowButton aria-label="Restore">
            <svg width="10" height="9" viewBox="0 0 10 9">
              <path d="M3 3V1h6v4H7M1 4h6v4H1z" fill="none" stroke="#000" strokeWidth="1.300" />
            </svg>
          </WindowButton>
          <WindowButton $gap aria-label="Close">
            <svg width="10" height="9" viewBox="0 0 10 9">
              <path d="M1.500 1l7 7M8.500 1l-7 7" stroke="#000" strokeWidth="1.500" />
            </svg>
          </WindowButton>
        </WindowButtons>
      </TitleBar>
      <MenuBar>
        {menus.map((m) => (
          <MenuItem key={m}>{m}</MenuItem>
        ))}
      </MenuBar>
      <Toolbar role="toolbar">
        <Grip />
        <Tool name="undo" />
        <Tool name="redo" />
        <Separator />
        <Tool name="link" />
        <Tool name="unlink" />
        <Separator />
        <Tool name="cursor" />
        <Tool name="region" />
        <Dropdown label="Selection filter" value="All" w={68} raise />
        <Separator />
        <Tool name="byName" />
        <Separator />
        <Tool name="move" />
        <Tool name="rotate" />
        <Tool name="scale" />
        <Tool name="manipulate" />
        <Separator />
        <Dropdown label="Reference coordinate system" value="View" w={68} raise />
        <Tool name="center" />
        <Separator />
        <Tool name="X" />
        <Tool name="Y" />
        <Tool name="Z" />
        <Tool name="XY" active />
        <Separator />
        <Tool name="mirror" />
        <Tool name="array" />
        <Tool name="align" />
        <Dropdown label="Named selection sets" value="" w={118} raise />
        <Separator />
        <Tool name="trackView" />
        <Separator />
        <Tool name="material" />
        <Tool name="balls" />
      </Toolbar>

      <Work>
        <Stage>
          <Viewports>
            <Viewport>
              <OrthoScene kind="top" />
              <ViewportName>Top</ViewportName>
            </Viewport>
            <Viewport>
              <OrthoScene kind="front" />
              <ViewportName>Front</ViewportName>
            </Viewport>
            <Viewport>
              <OrthoScene kind="left" />
              <ViewportName>Left</ViewportName>
            </Viewport>
            <Viewport $active>
              <UserScene />
              <ViewportName>User</ViewportName>
            </Viewport>
          </Viewports>
          <SliderBar>
            <SliderButton>&lt;</SliderButton>
            <SliderButton $wide>0 / 100</SliderButton>
            <SliderButton>&gt;</SliderButton>
          </SliderBar>
          <Track>
            {Array.from({ length: 21 }, (_, i) => (
              <TrackCell key={i} $last={i === 20}>
                <TrackLabel>{i * 5}</TrackLabel>
              </TrackCell>
            ))}
            <TrackCursor />
          </Track>
        </Stage>

        <Panel>
          <Tabs>
            {tabNames.map((t, i) => (
              <Tab key={t} $active={i === 0} aria-label={t}>
                <svg width="27" height="23" viewBox="0 0 27 23" aria-hidden="true">{tabArt[i]}</svg>
              </Tab>
            ))}
          </Tabs>
          <PanelBody>
            <PanelColumn>
              <Categories>
                {categoryNames.map((n, i) => (
                  <Category key={n} $active={i === 0} aria-label={n}>
                    <Svg s={21}>{categoryArt[i]}</Svg>
                  </Category>
                ))}
              </Categories>
              <SubtypeRow>
                <Dropdown label="Object subtype" value="Standard Primitives" w={142} />
              </SubtypeRow>
              <Rollouts>
                <Rollout>
                  <RolloutHead>
                    <span>-</span>
                    <span>Object Type</span>
                  </RolloutHead>
                  <RolloutBox>
                    <AutoGrid>
                      AutoGrid
                      <CheckBox type="checkbox" disabled />
                    </AutoGrid>
                    <ObjectGrid>
                      {primitives.map((p) => (
                        <PushButton key={p}>{p}</PushButton>
                      ))}
                    </ObjectGrid>
                  </RolloutBox>
                </Rollout>
                <Rollout>
                  <RolloutHead>
                    <span>-</span>
                    <span>Name and Color</span>
                  </RolloutHead>
                  <RolloutBox>
                    <NameRow>
                      <TextField aria-label="Object name" />
                      <Swatch aria-label="Object color" />
                    </NameRow>
                  </RolloutBox>
                </Rollout>
              </Rollouts>
            </PanelColumn>
            <PanelRest />
          </PanelBody>
        </Panel>
      </Work>

      <StatusBar>
        <Listener>
          <ListenerLine $pink aria-label="Macro recorder" />
          <ListenerLine aria-label="Script listener" defaultValue={'"C:\\gmax\\gamepacks\\FSX_GMaxGamepack\\"'} />
        </Listener>
        <StatusMain>
          <StatusRow>
            <Sunken>None Selected</Sunken>
            <IconCell $w={27} aria-label="Lock selection">
              <Svg s={18}>
                <path d="M6 8V4.500q3-3 6 0V8" fill="none" stroke="#111" strokeWidth="1.500" />
                <path d="M5 8h9M5 10.500h9M5 13h9M5 15h9" stroke="#111" strokeWidth="1.500" />
              </Svg>
            </IconCell>
            <IconCell $w={28} aria-label="Absolute mode">
              <Svg s={18}>
                <rect x="1.500" y="2.500" width="14" height="14" fill="none" stroke="#111" />
                <circle cx="8.500" cy="9.500" r="2" fill="none" stroke="#111" />
              </Svg>
            </IconCell>
            {coords.map(([l, v]) => (
              <Coordinate key={l}>
                {l}
                <TextField defaultValue={v} />
              </Coordinate>
            ))}
            <Gap $w={2} />
            <Sunken $w={99}>Grid = 10.0m</Sunken>
          </StatusRow>
          <StatusRow>
            <Sunken>Click and drag to rotate the view.  Clicking in the tabs constrains the rotation</Sunken>
            <Gap $w={3} />
            <Sunken $w={99}>Add Time Tag</Sunken>
            {["Degradation", "Crossing", "Plug-in"].map((n, i) => (
              <IconCell key={n} $w={29} aria-label={n}>
                <Svg s={18}>{shapeArt[i]}</Svg>
              </IconCell>
            ))}
            <Separator />
            {["3D Snap", "Angle Snap", "Percent Snap"].map((n, i) => (
              <IconCell key={n} $w={23} aria-label={n}>
                <Svg s={18}>{snapArt[i]}</Svg>
              </IconCell>
            ))}
            <Separator />
            <IconCell $w={20} aria-label="Spinner Snap">
              <Svg s={18}>{snapArt[3]}</Svg>
            </IconCell>
          </StatusRow>
        </StatusMain>
        <AnimateButton>Animate</AnimateButton>
        <Playback>
          <PlayRow>
            {playNames.map((n, i) => (
              <IconCell key={n} $w={24} aria-label={n}>
                <Svg s={20}>{playArt[i]}</Svg>
              </IconCell>
            ))}
          </PlayRow>
          <PlayRow>
            <IconCell $w={26} aria-label="Key mode">
              <Svg s={18}>
                <circle cx="4" cy="8" r="2.500" fill="none" stroke="#111" strokeWidth="1.600" />
                <path d="M6 8h11M12 8v4M16 8v4" stroke="#111" strokeWidth="1.600" />
              </Svg>
            </IconCell>
            <TextField aria-label="Current frame" defaultValue="0" />
            <IconCell $w={28} aria-label="Time configuration">
              <Svg s={18}>
                <path d="M3.500 3.500h9v11h-9z" fill="#c8c8c8" stroke="#111" />
                <path d="M3 4.500h10" stroke="#111" strokeWidth="2" />
                <circle cx="12" cy="11" r="4" fill="#fff" stroke="#a01018" strokeWidth="1.500" />
                <path d="M12 8.500V11h2" fill="none" stroke="#111" />
              </Svg>
            </IconCell>
          </PlayRow>
        </Playback>
        <Navigation>
          {navNames.map((n, i) => (
            <IconCell key={n} $w={22} $active={i === 6} aria-label={n}>
              <Svg s={20}>{navArt[i]}</Svg>
            </IconCell>
          ))}
        </Navigation>
      </StatusBar>

      <Note $x={434} $y={131}>Click the background and click a letter to change views</Note>
      <Note $x={437} $y={206}>Use the mouse wheel to zoom in and out!</Note>
      <Note $x={432} $y={385}>
        {"Clicking F3 will make parts wire frame or solid. Make sure you have a\npart selected, this avoids the tip below."}
      </Note>
      <Note $x={431} $y={469}>
        {"F2 will make the selected areas using polygon and elements show up\nred which you will learn in lesson 2."}
      </Note>
      <Note $x={427} $y={572}>
        {"Right Click on the upper left corners over the words like LEFT to open\noptions for that window. Don't worry about this for now but try a few\nsettings to see what might be useful to you."}
      </Note>
      <Note $tone="yellow" $x={345} $y={285}>{"TOP=T\nor\nBOTTOM=B"}</Note>
      <Note $tone="yellow" $x={1120} $y={293}>{"FRONT=F\nor\nBACK=K"}</Note>
      <Note $tone="yellow" $x={345} $y={765}>{"LEFT=L\nor\nRIGHT=R"}</Note>
      <Note $tone="yellow" $x={1103} $y={751}>USER=U</Note>
      <Note $tone="yellow" $x={1655} $y={821}>{"Use arc\nrotate only\nin the user\nwindow"}</Note>
      <NoteArrow viewBox="0 0 115 130" aria-hidden="true">
        <path d="M7 12L18 6L82 84L88 81L110 124L71 96L76 91z" fill={c.yellow} />
      </NoteArrow>
    </Window>
  );
}
